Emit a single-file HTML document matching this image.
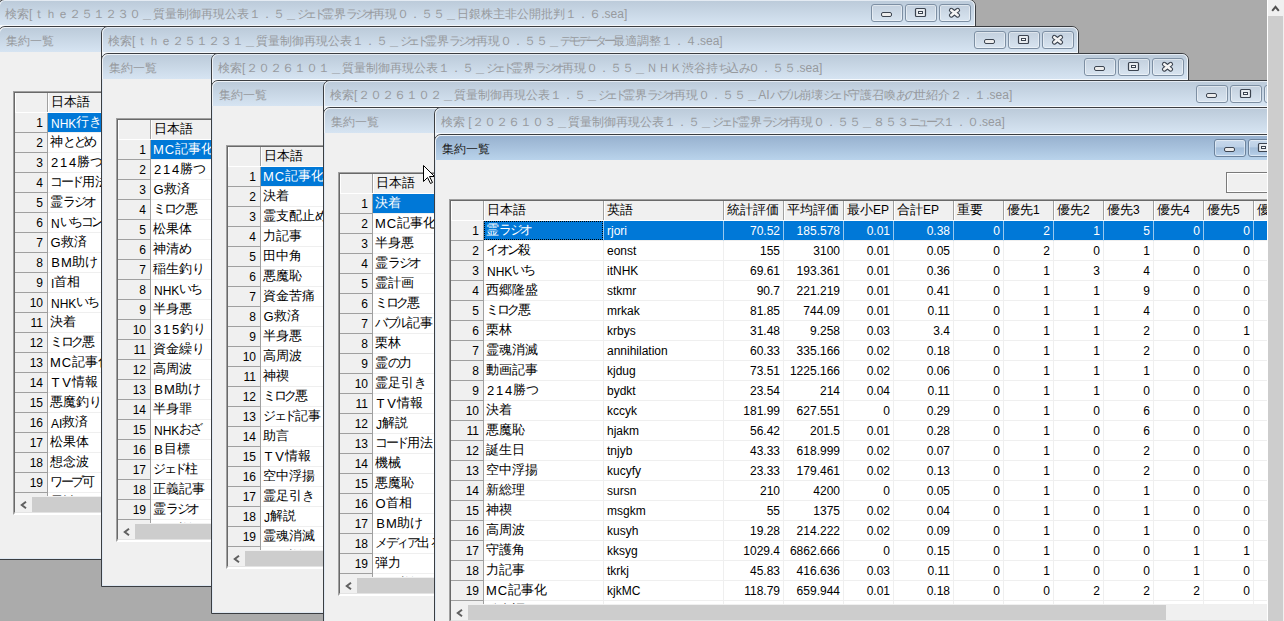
<!DOCTYPE html><html><head><meta charset="utf-8"><style>
*{box-sizing:border-box}
body{margin:0;width:1284px;height:621px;background:#ababab;position:relative;overflow:hidden;font-family:"Liberation Sans",sans-serif;font-size:12px}
.win{position:absolute;width:978px;height:561px;border:1px solid #3b3e42;border-radius:7px 7px 0 0;background:#eef3f8;overflow:hidden}
.tbar{position:absolute;left:0;top:0;right:0;height:26px;background:linear-gradient(#bccbda,#d6e4f2);border-top:1px solid #e4ebf3;border-left:1px solid #eef3f8;border-right:1px solid #eef3f8;border-bottom:1px solid #f6f9fc;border-radius:6px 6px 0 0}
.hk{letter-spacing:-0.6px}
.win .hl{position:absolute;left:0;top:0;right:0;height:25px;border-top:1px solid #eef3f8;border-left:1px solid #eef3f8;border-right:1px solid #eef3f8;border-radius:4px 4px 0 0;}
.title{position:absolute;left:6px;top:6px;white-space:nowrap;color:#979a9e;font-size:12px;line-height:16px}
.inner{position:absolute;left:-1px;top:26px;width:978px;height:534px;border:1px solid #3b3e42;border-radius:7px 7px 0 0;background:#f0f0f0;overflow:hidden}
.inner .tb{position:absolute;left:0;top:0;right:0;height:25px;background:linear-gradient(#bccbda,#d6e4f2);border-top:1px solid #eef3f8;border-left:1px solid #eef3f8;border-radius:6px 6px 0 0}
.inner.act .tb{background:linear-gradient(#97b1cf,#b9d3eb)}
.inner .ititle{position:absolute;left:7px;top:6px;color:#979a9e;font-size:12px;line-height:16px;white-space:nowrap}
.inner.act .ititle{color:#202020}
.inner .side{position:absolute;left:0;top:25px;bottom:0;width:1px;background:#dfe8f2}
.inner .bot{position:absolute;left:0;right:0;bottom:0;height:1px;background:#dfe8f2}
.btn{position:absolute;width:32px;height:18px;border:1px solid #7d8fa3;border-radius:3px;background:linear-gradient(#c3d0de,#d8e4f0);box-shadow:inset 0 0 0 1px rgba(255,255,255,.45)}
.inner.act .btn{background:linear-gradient(#c8d9ec,#bcd0e6 42%,#a3bdd9 50%,#aec7e2 80%,#bcd4ec);border-color:#6b829c}
.btn svg{position:absolute;left:0;top:0}
.grid{position:absolute;height:424px;border-top:2px solid;border-left:2px solid;border-bottom:2px solid;border-color:#a0a0a0 #fff #fff #a0a0a0;background:#f0f0f0}
.grid:before{content:"";position:absolute;left:-1px;top:-1px;right:0;bottom:0;border-top:1px solid #696969;border-left:1px solid #696969;border-bottom:1px solid #e3e3e3;pointer-events:none;z-index:3}
.gi{position:absolute;left:0;top:0;right:0;height:403px;overflow:hidden;background:#fff}
.hc{position:absolute;background:#f0f0f0;box-sizing:content-box;border-right:1px solid #a0a0a0;white-space:nowrap;overflow:hidden;box-shadow:inset 1px 0 0 #fff}
.hc span{position:absolute;left:3px;top:2px;line-height:14px}
.hc .j{top:0}
.rh{position:absolute;left:0;width:32px;height:19px;box-sizing:content-box;background:#f0f0f0;border-right:1px solid #a0a0a0;border-bottom:1px solid #a0a0a0;text-align:right;padding:1px 0 0 0;height:18px;line-height:19px;color:#000}
.rh{padding-right:4px;width:28px}
.dc{position:absolute;height:19px;box-sizing:content-box;border-right:1px solid #efefef;border-bottom:1px solid #efefef;background:#fff;white-space:nowrap;overflow:hidden;line-height:19px}
.dc span{position:absolute;left:2px;top:1px}
.dc.num span{left:auto;right:3px}
.dc.sel{background:#0078d7;color:#fff;border-right-color:#99c9ef}
.j{font-weight:normal;position:relative;top:-2px;font-size:13px}
.k{letter-spacing:-2.5px}
.fw{font-weight:normal;display:inline-block;text-align:center;font-size:13px;position:relative;top:-1px}
.focus{position:absolute;left:0;top:0;right:0;bottom:0;border:1px dotted #000}
.hs{position:absolute;left:0;top:403px;right:0;height:17px;background:#f0f0f0}
.la{position:absolute;left:5px;top:5px}
.th{position:absolute;left:17px;top:1px;height:15px;background:#cdcdcd}
.vs{position:absolute;left:1267px;top:0;width:17px;height:621px;background:#f0f0f0;border-left:1px solid #fff}
.vs .th2{position:absolute;left:0;top:16px;width:15px;height:605px;background:#cdcdcd}
.tbx{position:absolute;width:60px;height:21px;background:#f0f0f0;border:1px solid #7a7a7a;box-shadow:inset 0 0 0 1px #fff}
.cursor{position:absolute;left:423px;top:165px;z-index:1}
</style></head><body><div class="win" style="left:-2px;top:-1px;z-index:10"><div class="tbar"></div><div class="title">検索<span style="margin-right:0.7px">[</span>ｔｈｅ２５１２３０＿質量制御再現公表１．５＿<span style="letter-spacing:-3.6px">ジェド</span>霊界<span style="letter-spacing:-3.0px">ラジオ</span>再現０．５５＿日銀株主非公開批判１．６.sea]</div><div class="btn" style="left:872px;top:4px"><svg width="30" height="16" viewBox="0 0 30 16"><rect x="9.5" y="7.5" width="10" height="4" rx="1.5" fill="#ececec" stroke="#3c4450" stroke-width="1"/></svg></div><div class="btn" style="left:906px;top:4px"><svg width="30" height="16" viewBox="0 0 30 16"><rect x="9.5" y="3.5" width="10" height="8" rx="1" fill="#e8ecf0" stroke="#3c4450" stroke-width="1.2"/><rect x="12.5" y="6.5" width="4" height="2" fill="#fff" stroke="#3c4450" stroke-width="1"/></svg></div><div class="btn" style="left:940px;top:4px"><svg width="30" height="16" viewBox="0 0 30 16"><path d="M11.3 5.2 L17.7 10.3 M17.7 5.2 L11.3 10.3" stroke="#3c4450" stroke-width="4.8" stroke-linecap="round"/><path d="M11.3 5.2 L17.7 10.3 M17.7 5.2 L11.3 10.3" stroke="#f4f4f4" stroke-width="2.6" stroke-linecap="round"/></svg></div><div class="inner"><div class="tb"></div><div class="side"></div><div class="bot"></div><div class="ititle">集約一覧</div></div></div><div style="position:absolute;left:0;top:0;z-index:11"><div class="grid" style="left:13px;top:91px;width:277px"><div class="gi"><div class="hc" style="left:0;top:0;width:32px;height:19px"></div><div class="hc" style="left:33px;top:0;width:119px;height:19px"><span><b class="j">日本語</b></span></div><div class="hc" style="left:153px;top:0;width:119px;height:19px"><span><b class="j">英語</b></span></div><div class="rh" style="top:20px">1</div><div class="dc sel" style="left:33px;top:20px;width:119px"><span style="left:3px">NHK<b class="j">行</b><b class="j k">き</b></span></div><div class="dc sel" style="left:153px;top:20px;width:119px"><span></span></div><div class="rh" style="top:40px">2</div><div class="dc" style="left:33px;top:40px;width:119px"><span><b class="j">神</b><b class="j k">とどめ</b></span></div><div class="dc" style="left:153px;top:40px;width:119px"><span></span></div><div class="rh" style="top:60px">3</div><div class="dc" style="left:33px;top:60px;width:119px"><span><b class="fw" style="width:9px">2</b><b class="fw" style="width:9px">1</b><b class="fw" style="width:9px">4</b><b class="j">勝</b><b class="j k">つ</b></span></div><div class="dc" style="left:153px;top:60px;width:119px"><span></span></div><div class="rh" style="top:80px">4</div><div class="dc" style="left:33px;top:80px;width:119px"><span><b class="j k">コード</b><b class="j">用法</b></span></div><div class="dc" style="left:153px;top:80px;width:119px"><span></span></div><div class="rh" style="top:100px">5</div><div class="dc" style="left:33px;top:100px;width:119px"><span><b class="j">霊</b><b class="j k">ラジオ</b></span></div><div class="dc" style="left:153px;top:100px;width:119px"><span></span></div><div class="rh" style="top:120px">6</div><div class="dc" style="left:33px;top:120px;width:119px"><span style="left:3px">N<b class="j k">いちコン</b></span></div><div class="dc" style="left:153px;top:120px;width:119px"><span></span></div><div class="rh" style="top:140px">7</div><div class="dc" style="left:33px;top:140px;width:119px"><span><b class="fw" style="width:11px">G</b><b class="j">救済</b></span></div><div class="dc" style="left:153px;top:140px;width:119px"><span></span></div><div class="rh" style="top:160px">8</div><div class="dc" style="left:33px;top:160px;width:119px"><span><b class="fw" style="width:11px">B</b><b class="fw" style="width:11px">M</b><b class="j">助</b><b class="j k">け</b></span></div><div class="dc" style="left:153px;top:160px;width:119px"><span></span></div><div class="rh" style="top:180px">9</div><div class="dc" style="left:33px;top:180px;width:119px"><span style="left:3px">I<b class="j">首相</b></span></div><div class="dc" style="left:153px;top:180px;width:119px"><span></span></div><div class="rh" style="top:200px">10</div><div class="dc" style="left:33px;top:200px;width:119px"><span style="left:3px">NHK<b class="j k">いち</b></span></div><div class="dc" style="left:153px;top:200px;width:119px"><span></span></div><div class="rh" style="top:220px">11</div><div class="dc" style="left:33px;top:220px;width:119px"><span><b class="j">決着</b></span></div><div class="dc" style="left:153px;top:220px;width:119px"><span></span></div><div class="rh" style="top:240px">12</div><div class="dc" style="left:33px;top:240px;width:119px"><span><b class="j k">ミロク</b><b class="j">悪</b></span></div><div class="dc" style="left:153px;top:240px;width:119px"><span></span></div><div class="rh" style="top:260px">13</div><div class="dc" style="left:33px;top:260px;width:119px"><span><b class="fw" style="width:11px">M</b><b class="fw" style="width:11px">C</b><b class="j">記事化</b></span></div><div class="dc" style="left:153px;top:260px;width:119px"><span></span></div><div class="rh" style="top:280px">14</div><div class="dc" style="left:33px;top:280px;width:119px"><span><b class="fw" style="width:11px">T</b><b class="fw" style="width:11px">V</b><b class="j">情報</b></span></div><div class="dc" style="left:153px;top:280px;width:119px"><span></span></div><div class="rh" style="top:300px">15</div><div class="dc" style="left:33px;top:300px;width:119px"><span><b class="j">悪魔釣</b><b class="j k">り</b></span></div><div class="dc" style="left:153px;top:300px;width:119px"><span></span></div><div class="rh" style="top:320px">16</div><div class="dc" style="left:33px;top:320px;width:119px"><span style="left:3px">AI<b class="j">救済</b></span></div><div class="dc" style="left:153px;top:320px;width:119px"><span></span></div><div class="rh" style="top:340px">17</div><div class="dc" style="left:33px;top:340px;width:119px"><span><b class="j">松果体</b></span></div><div class="dc" style="left:153px;top:340px;width:119px"><span></span></div><div class="rh" style="top:360px">18</div><div class="dc" style="left:33px;top:360px;width:119px"><span><b class="j">想念波</b></span></div><div class="dc" style="left:153px;top:360px;width:119px"><span></span></div><div class="rh" style="top:380px">19</div><div class="dc" style="left:33px;top:380px;width:119px"><span><b class="j k">ワープ</b><b class="j">可</b></span></div><div class="dc" style="left:153px;top:380px;width:119px"><span></span></div><div class="rh" style="top:400px"></div><div class="dc" style="left:33px;top:400px;width:119px"><span><b class="j">霊計画</b></span></div><div class="dc" style="left:153px;top:400px;width:119px"><span></span></div></div><div class="hs"><svg class="la" width="8" height="8" viewBox="0 0 8 8"><path d="M6 0.8 L1.8 4 L6 7.2" fill="none" stroke="#606060" stroke-width="2"/></svg><div class="th" style="width:698px"></div></div></div></div><div class="win" style="left:101px;top:26px;z-index:20"><div class="tbar"></div><div class="title">検索<span style="margin-right:0.7px">[</span>ｔｈｅ２５１２３１＿質量制御再現公表１．５＿<span style="letter-spacing:-3.6px">ジェド</span>霊界<span style="letter-spacing:-3.0px">ラジオ</span>再現０．５５＿<span style="letter-spacing:-3.27px">デモデーター</span>最適調整１．４.sea]</div><div class="btn" style="left:872px;top:4px"><svg width="30" height="16" viewBox="0 0 30 16"><rect x="9.5" y="7.5" width="10" height="4" rx="1.5" fill="#ececec" stroke="#3c4450" stroke-width="1"/></svg></div><div class="btn" style="left:906px;top:4px"><svg width="30" height="16" viewBox="0 0 30 16"><rect x="9.5" y="3.5" width="10" height="8" rx="1" fill="#e8ecf0" stroke="#3c4450" stroke-width="1.2"/><rect x="12.5" y="6.5" width="4" height="2" fill="#fff" stroke="#3c4450" stroke-width="1"/></svg></div><div class="btn" style="left:940px;top:4px"><svg width="30" height="16" viewBox="0 0 30 16"><path d="M11.3 5.2 L17.7 10.3 M17.7 5.2 L11.3 10.3" stroke="#3c4450" stroke-width="4.8" stroke-linecap="round"/><path d="M11.3 5.2 L17.7 10.3 M17.7 5.2 L11.3 10.3" stroke="#f4f4f4" stroke-width="2.6" stroke-linecap="round"/></svg></div><div class="inner"><div class="tb"></div><div class="side"></div><div class="bot"></div><div class="ititle">集約一覧</div></div></div><div style="position:absolute;left:0;top:0;z-index:21"><div class="grid" style="left:116px;top:118px;width:277px"><div class="gi"><div class="hc" style="left:0;top:0;width:32px;height:19px"></div><div class="hc" style="left:33px;top:0;width:119px;height:19px"><span><b class="j">日本語</b></span></div><div class="hc" style="left:153px;top:0;width:119px;height:19px"><span><b class="j">英語</b></span></div><div class="rh" style="top:20px">1</div><div class="dc sel" style="left:33px;top:20px;width:119px"><span><b class="fw" style="width:11px">M</b><b class="fw" style="width:11px">C</b><b class="j">記事化</b></span></div><div class="dc sel" style="left:153px;top:20px;width:119px"><span></span></div><div class="rh" style="top:40px">2</div><div class="dc" style="left:33px;top:40px;width:119px"><span><b class="fw" style="width:9px">2</b><b class="fw" style="width:9px">1</b><b class="fw" style="width:9px">4</b><b class="j">勝</b><b class="j k">つ</b></span></div><div class="dc" style="left:153px;top:40px;width:119px"><span></span></div><div class="rh" style="top:60px">3</div><div class="dc" style="left:33px;top:60px;width:119px"><span><b class="fw" style="width:11px">G</b><b class="j">救済</b></span></div><div class="dc" style="left:153px;top:60px;width:119px"><span></span></div><div class="rh" style="top:80px">4</div><div class="dc" style="left:33px;top:80px;width:119px"><span><b class="j k">ミロク</b><b class="j">悪</b></span></div><div class="dc" style="left:153px;top:80px;width:119px"><span></span></div><div class="rh" style="top:100px">5</div><div class="dc" style="left:33px;top:100px;width:119px"><span><b class="j">松果体</b></span></div><div class="dc" style="left:153px;top:100px;width:119px"><span></span></div><div class="rh" style="top:120px">6</div><div class="dc" style="left:33px;top:120px;width:119px"><span><b class="j">神清</b><b class="j k">め</b></span></div><div class="dc" style="left:153px;top:120px;width:119px"><span></span></div><div class="rh" style="top:140px">7</div><div class="dc" style="left:33px;top:140px;width:119px"><span><b class="j">稲生釣</b><b class="j k">り</b></span></div><div class="dc" style="left:153px;top:140px;width:119px"><span></span></div><div class="rh" style="top:160px">8</div><div class="dc" style="left:33px;top:160px;width:119px"><span style="left:3px">NHK<b class="j k">いち</b></span></div><div class="dc" style="left:153px;top:160px;width:119px"><span></span></div><div class="rh" style="top:180px">9</div><div class="dc" style="left:33px;top:180px;width:119px"><span><b class="j">半身悪</b></span></div><div class="dc" style="left:153px;top:180px;width:119px"><span></span></div><div class="rh" style="top:200px">10</div><div class="dc" style="left:33px;top:200px;width:119px"><span><b class="fw" style="width:9px">3</b><b class="fw" style="width:9px">1</b><b class="fw" style="width:9px">5</b><b class="j">釣</b><b class="j k">り</b></span></div><div class="dc" style="left:153px;top:200px;width:119px"><span></span></div><div class="rh" style="top:220px">11</div><div class="dc" style="left:33px;top:220px;width:119px"><span><b class="j">資金繰</b><b class="j k">り</b></span></div><div class="dc" style="left:153px;top:220px;width:119px"><span></span></div><div class="rh" style="top:240px">12</div><div class="dc" style="left:33px;top:240px;width:119px"><span><b class="j">高周波</b></span></div><div class="dc" style="left:153px;top:240px;width:119px"><span></span></div><div class="rh" style="top:260px">13</div><div class="dc" style="left:33px;top:260px;width:119px"><span><b class="fw" style="width:11px">B</b><b class="fw" style="width:11px">M</b><b class="j">助</b><b class="j k">け</b></span></div><div class="dc" style="left:153px;top:260px;width:119px"><span></span></div><div class="rh" style="top:280px">14</div><div class="dc" style="left:33px;top:280px;width:119px"><span><b class="j">半身罪</b></span></div><div class="dc" style="left:153px;top:280px;width:119px"><span></span></div><div class="rh" style="top:300px">15</div><div class="dc" style="left:33px;top:300px;width:119px"><span style="left:3px">NHK<b class="j k">おざ</b></span></div><div class="dc" style="left:153px;top:300px;width:119px"><span></span></div><div class="rh" style="top:320px">16</div><div class="dc" style="left:33px;top:320px;width:119px"><span><b class="fw" style="width:11px">B</b><b class="j">目標</b></span></div><div class="dc" style="left:153px;top:320px;width:119px"><span></span></div><div class="rh" style="top:340px">17</div><div class="dc" style="left:33px;top:340px;width:119px"><span><b class="j k">ジェド</b><b class="j">柱</b></span></div><div class="dc" style="left:153px;top:340px;width:119px"><span></span></div><div class="rh" style="top:360px">18</div><div class="dc" style="left:33px;top:360px;width:119px"><span><b class="j">正義記事</b></span></div><div class="dc" style="left:153px;top:360px;width:119px"><span></span></div><div class="rh" style="top:380px">19</div><div class="dc" style="left:33px;top:380px;width:119px"><span><b class="j">霊</b><b class="j k">ラジオ</b></span></div><div class="dc" style="left:153px;top:380px;width:119px"><span></span></div><div class="rh" style="top:400px"></div><div class="dc" style="left:33px;top:400px;width:119px"><span style="left:3px">NHK<b class="j">語</b></span></div><div class="dc" style="left:153px;top:400px;width:119px"><span></span></div></div><div class="hs"><svg class="la" width="8" height="8" viewBox="0 0 8 8"><path d="M6 0.8 L1.8 4 L6 7.2" fill="none" stroke="#606060" stroke-width="2"/></svg><div class="th" style="width:698px"></div></div></div></div><div class="win" style="left:211px;top:53px;z-index:30"><div class="tbar"></div><div class="title">検索<span style="margin-right:0.7px">[</span>２０２６１０１＿質量制御再現公表１．５＿<span style="letter-spacing:-3.6px">ジェド</span>霊界<span style="letter-spacing:-3.0px">ラジオ</span>再現０．５５＿ＮＨＫ渋谷持<span style="letter-spacing:-3px">ち</span>込<span style="letter-spacing:-3px">み</span>０．５５.sea]</div><div class="btn" style="left:872px;top:4px"><svg width="30" height="16" viewBox="0 0 30 16"><rect x="9.5" y="7.5" width="10" height="4" rx="1.5" fill="#ececec" stroke="#3c4450" stroke-width="1"/></svg></div><div class="btn" style="left:906px;top:4px"><svg width="30" height="16" viewBox="0 0 30 16"><rect x="9.5" y="3.5" width="10" height="8" rx="1" fill="#e8ecf0" stroke="#3c4450" stroke-width="1.2"/><rect x="12.5" y="6.5" width="4" height="2" fill="#fff" stroke="#3c4450" stroke-width="1"/></svg></div><div class="btn" style="left:940px;top:4px"><svg width="30" height="16" viewBox="0 0 30 16"><path d="M11.3 5.2 L17.7 10.3 M17.7 5.2 L11.3 10.3" stroke="#3c4450" stroke-width="4.8" stroke-linecap="round"/><path d="M11.3 5.2 L17.7 10.3 M17.7 5.2 L11.3 10.3" stroke="#f4f4f4" stroke-width="2.6" stroke-linecap="round"/></svg></div><div class="inner"><div class="tb"></div><div class="side"></div><div class="bot"></div><div class="ititle">集約一覧</div></div></div><div style="position:absolute;left:0;top:0;z-index:31"><div class="grid" style="left:226px;top:145px;width:277px"><div class="gi"><div class="hc" style="left:0;top:0;width:32px;height:19px"></div><div class="hc" style="left:33px;top:0;width:119px;height:19px"><span><b class="j">日本語</b></span></div><div class="hc" style="left:153px;top:0;width:119px;height:19px"><span><b class="j">英語</b></span></div><div class="rh" style="top:20px">1</div><div class="dc sel" style="left:33px;top:20px;width:119px"><span><b class="fw" style="width:11px">M</b><b class="fw" style="width:11px">C</b><b class="j">記事化</b></span></div><div class="dc sel" style="left:153px;top:20px;width:119px"><span></span></div><div class="rh" style="top:40px">2</div><div class="dc" style="left:33px;top:40px;width:119px"><span><b class="j">決着</b></span></div><div class="dc" style="left:153px;top:40px;width:119px"><span></span></div><div class="rh" style="top:60px">3</div><div class="dc" style="left:33px;top:60px;width:119px"><span><b class="j">霊支配止</b><b class="j k">め</b></span></div><div class="dc" style="left:153px;top:60px;width:119px"><span></span></div><div class="rh" style="top:80px">4</div><div class="dc" style="left:33px;top:80px;width:119px"><span><b class="j">力記事</b></span></div><div class="dc" style="left:153px;top:80px;width:119px"><span></span></div><div class="rh" style="top:100px">5</div><div class="dc" style="left:33px;top:100px;width:119px"><span><b class="j">田中角</b></span></div><div class="dc" style="left:153px;top:100px;width:119px"><span></span></div><div class="rh" style="top:120px">6</div><div class="dc" style="left:33px;top:120px;width:119px"><span><b class="j">悪魔恥</b></span></div><div class="dc" style="left:153px;top:120px;width:119px"><span></span></div><div class="rh" style="top:140px">7</div><div class="dc" style="left:33px;top:140px;width:119px"><span><b class="j">資金苦痛</b></span></div><div class="dc" style="left:153px;top:140px;width:119px"><span></span></div><div class="rh" style="top:160px">8</div><div class="dc" style="left:33px;top:160px;width:119px"><span><b class="fw" style="width:11px">G</b><b class="j">救済</b></span></div><div class="dc" style="left:153px;top:160px;width:119px"><span></span></div><div class="rh" style="top:180px">9</div><div class="dc" style="left:33px;top:180px;width:119px"><span><b class="j">半身悪</b></span></div><div class="dc" style="left:153px;top:180px;width:119px"><span></span></div><div class="rh" style="top:200px">10</div><div class="dc" style="left:33px;top:200px;width:119px"><span><b class="j">高周波</b></span></div><div class="dc" style="left:153px;top:200px;width:119px"><span></span></div><div class="rh" style="top:220px">11</div><div class="dc" style="left:33px;top:220px;width:119px"><span><b class="j">神禊</b></span></div><div class="dc" style="left:153px;top:220px;width:119px"><span></span></div><div class="rh" style="top:240px">12</div><div class="dc" style="left:33px;top:240px;width:119px"><span><b class="j k">ミロク</b><b class="j">悪</b></span></div><div class="dc" style="left:153px;top:240px;width:119px"><span></span></div><div class="rh" style="top:260px">13</div><div class="dc" style="left:33px;top:260px;width:119px"><span><b class="j k">ジェド</b><b class="j">記事</b></span></div><div class="dc" style="left:153px;top:260px;width:119px"><span></span></div><div class="rh" style="top:280px">14</div><div class="dc" style="left:33px;top:280px;width:119px"><span><b class="j">助言</b></span></div><div class="dc" style="left:153px;top:280px;width:119px"><span></span></div><div class="rh" style="top:300px">15</div><div class="dc" style="left:33px;top:300px;width:119px"><span><b class="fw" style="width:11px">T</b><b class="fw" style="width:11px">V</b><b class="j">情報</b></span></div><div class="dc" style="left:153px;top:300px;width:119px"><span></span></div><div class="rh" style="top:320px">16</div><div class="dc" style="left:33px;top:320px;width:119px"><span><b class="j">空中浮揚</b></span></div><div class="dc" style="left:153px;top:320px;width:119px"><span></span></div><div class="rh" style="top:340px">17</div><div class="dc" style="left:33px;top:340px;width:119px"><span><b class="j">霊足引</b><b class="j k">き</b></span></div><div class="dc" style="left:153px;top:340px;width:119px"><span></span></div><div class="rh" style="top:360px">18</div><div class="dc" style="left:33px;top:360px;width:119px"><span style="left:3px">J<b class="j">解説</b></span></div><div class="dc" style="left:153px;top:360px;width:119px"><span></span></div><div class="rh" style="top:380px">19</div><div class="dc" style="left:33px;top:380px;width:119px"><span><b class="j">霊魂消滅</b></span></div><div class="dc" style="left:153px;top:380px;width:119px"><span></span></div><div class="rh" style="top:400px"></div><div class="dc" style="left:33px;top:400px;width:119px"><span style="left:3px">NHK<b class="j">語</b></span></div><div class="dc" style="left:153px;top:400px;width:119px"><span></span></div></div><div class="hs"><svg class="la" width="8" height="8" viewBox="0 0 8 8"><path d="M6 0.8 L1.8 4 L6 7.2" fill="none" stroke="#606060" stroke-width="2"/></svg><div class="th" style="width:698px"></div></div></div></div><div class="win" style="left:323px;top:80px;z-index:40"><div class="tbar"></div><div class="title">検索<span style="margin-right:0.7px">[</span>２０２６１０２＿質量制御再現公表１．５＿<span style="letter-spacing:-3.6px">ジェド</span>霊界<span style="letter-spacing:-3.0px">ラジオ</span>再現０．５５＿AI<span style="letter-spacing:-2.17px">バブル</span>崩壊<span style="letter-spacing:-3.6px">ジェド</span>守護召喚<span style="letter-spacing:-3px">あの</span>世紹介２．１.sea]</div><div class="btn" style="left:872px;top:4px"><svg width="30" height="16" viewBox="0 0 30 16"><rect x="9.5" y="7.5" width="10" height="4" rx="1.5" fill="#ececec" stroke="#3c4450" stroke-width="1"/></svg></div><div class="btn" style="left:906px;top:4px"><svg width="30" height="16" viewBox="0 0 30 16"><rect x="9.5" y="3.5" width="10" height="8" rx="1" fill="#e8ecf0" stroke="#3c4450" stroke-width="1.2"/><rect x="12.5" y="6.5" width="4" height="2" fill="#fff" stroke="#3c4450" stroke-width="1"/></svg></div><div class="btn" style="left:940px;top:4px"><svg width="30" height="16" viewBox="0 0 30 16"><path d="M11.3 5.2 L17.7 10.3 M17.7 5.2 L11.3 10.3" stroke="#3c4450" stroke-width="4.8" stroke-linecap="round"/><path d="M11.3 5.2 L17.7 10.3 M17.7 5.2 L11.3 10.3" stroke="#f4f4f4" stroke-width="2.6" stroke-linecap="round"/></svg></div><div class="inner"><div class="tb"></div><div class="side"></div><div class="bot"></div><div class="ititle">集約一覧</div></div></div><div style="position:absolute;left:0;top:0;z-index:41"><div class="grid" style="left:338px;top:172px;width:277px"><div class="gi"><div class="hc" style="left:0;top:0;width:32px;height:19px"></div><div class="hc" style="left:33px;top:0;width:119px;height:19px"><span><b class="j">日本語</b></span></div><div class="hc" style="left:153px;top:0;width:119px;height:19px"><span><b class="j">英語</b></span></div><div class="rh" style="top:20px">1</div><div class="dc sel" style="left:33px;top:20px;width:119px"><span><b class="j">決着</b></span></div><div class="dc sel" style="left:153px;top:20px;width:119px"><span></span></div><div class="rh" style="top:40px">2</div><div class="dc" style="left:33px;top:40px;width:119px"><span><b class="fw" style="width:11px">M</b><b class="fw" style="width:11px">C</b><b class="j">記事化</b></span></div><div class="dc" style="left:153px;top:40px;width:119px"><span></span></div><div class="rh" style="top:60px">3</div><div class="dc" style="left:33px;top:60px;width:119px"><span><b class="j">半身悪</b></span></div><div class="dc" style="left:153px;top:60px;width:119px"><span></span></div><div class="rh" style="top:80px">4</div><div class="dc" style="left:33px;top:80px;width:119px"><span><b class="j">霊</b><b class="j k">ラジオ</b></span></div><div class="dc" style="left:153px;top:80px;width:119px"><span></span></div><div class="rh" style="top:100px">5</div><div class="dc" style="left:33px;top:100px;width:119px"><span><b class="j">霊計画</b></span></div><div class="dc" style="left:153px;top:100px;width:119px"><span></span></div><div class="rh" style="top:120px">6</div><div class="dc" style="left:33px;top:120px;width:119px"><span><b class="j k">ミロク</b><b class="j">悪</b></span></div><div class="dc" style="left:153px;top:120px;width:119px"><span></span></div><div class="rh" style="top:140px">7</div><div class="dc" style="left:33px;top:140px;width:119px"><span><b class="j k">バブル</b><b class="j">記事</b></span></div><div class="dc" style="left:153px;top:140px;width:119px"><span></span></div><div class="rh" style="top:160px">8</div><div class="dc" style="left:33px;top:160px;width:119px"><span><b class="j">栗林</b></span></div><div class="dc" style="left:153px;top:160px;width:119px"><span></span></div><div class="rh" style="top:180px">9</div><div class="dc" style="left:33px;top:180px;width:119px"><span><b class="j">霊</b><b class="j k">の</b><b class="j">力</b></span></div><div class="dc" style="left:153px;top:180px;width:119px"><span></span></div><div class="rh" style="top:200px">10</div><div class="dc" style="left:33px;top:200px;width:119px"><span><b class="j">霊足引</b><b class="j k">き</b></span></div><div class="dc" style="left:153px;top:200px;width:119px"><span></span></div><div class="rh" style="top:220px">11</div><div class="dc" style="left:33px;top:220px;width:119px"><span><b class="fw" style="width:11px">T</b><b class="fw" style="width:11px">V</b><b class="j">情報</b></span></div><div class="dc" style="left:153px;top:220px;width:119px"><span></span></div><div class="rh" style="top:240px">12</div><div class="dc" style="left:33px;top:240px;width:119px"><span style="left:3px">J<b class="j">解説</b></span></div><div class="dc" style="left:153px;top:240px;width:119px"><span></span></div><div class="rh" style="top:260px">13</div><div class="dc" style="left:33px;top:260px;width:119px"><span><b class="j k">コード</b><b class="j">用法</b></span></div><div class="dc" style="left:153px;top:260px;width:119px"><span></span></div><div class="rh" style="top:280px">14</div><div class="dc" style="left:33px;top:280px;width:119px"><span><b class="j">機械</b></span></div><div class="dc" style="left:153px;top:280px;width:119px"><span></span></div><div class="rh" style="top:300px">15</div><div class="dc" style="left:33px;top:300px;width:119px"><span><b class="j">悪魔恥</b></span></div><div class="dc" style="left:153px;top:300px;width:119px"><span></span></div><div class="rh" style="top:320px">16</div><div class="dc" style="left:33px;top:320px;width:119px"><span><b class="fw" style="width:11px">O</b><b class="j">首相</b></span></div><div class="dc" style="left:153px;top:320px;width:119px"><span></span></div><div class="rh" style="top:340px">17</div><div class="dc" style="left:33px;top:340px;width:119px"><span><b class="fw" style="width:11px">B</b><b class="fw" style="width:11px">M</b><b class="j">助</b><b class="j k">け</b></span></div><div class="dc" style="left:153px;top:340px;width:119px"><span></span></div><div class="rh" style="top:360px">18</div><div class="dc" style="left:33px;top:360px;width:119px"><span><b class="j k">メディア</b><b class="j">出</b><b class="j k">る</b></span></div><div class="dc" style="left:153px;top:360px;width:119px"><span></span></div><div class="rh" style="top:380px">19</div><div class="dc" style="left:33px;top:380px;width:119px"><span><b class="j">弾力</b></span></div><div class="dc" style="left:153px;top:380px;width:119px"><span></span></div><div class="rh" style="top:400px"></div><div class="dc" style="left:33px;top:400px;width:119px"><span style="left:3px">NHK<b class="j">語</b></span></div><div class="dc" style="left:153px;top:400px;width:119px"><span></span></div></div><div class="hs"><svg class="la" width="8" height="8" viewBox="0 0 8 8"><path d="M6 0.8 L1.8 4 L6 7.2" fill="none" stroke="#606060" stroke-width="2"/></svg><div class="th" style="width:698px"></div></div></div></div><div class="win" style="left:434px;top:107px;z-index:50"><div class="tbar"></div><div class="title">検索 <span style="margin-right:0.7px">[</span>２０２６１０３＿質量制御再現公表１．５＿<span style="letter-spacing:-3.6px">ジェド</span>霊界<span style="letter-spacing:-3.0px">ラジオ</span>再現０．５５＿８５３<span style="letter-spacing:-3.45px">ニュース</span>１．０.sea]</div><div class="btn" style="left:872px;top:4px"><svg width="30" height="16" viewBox="0 0 30 16"><rect x="9.5" y="7.5" width="10" height="4" rx="1.5" fill="#ececec" stroke="#3c4450" stroke-width="1"/></svg></div><div class="btn" style="left:906px;top:4px"><svg width="30" height="16" viewBox="0 0 30 16"><rect x="9.5" y="3.5" width="10" height="8" rx="1" fill="#e8ecf0" stroke="#3c4450" stroke-width="1.2"/><rect x="12.5" y="6.5" width="4" height="2" fill="#fff" stroke="#3c4450" stroke-width="1"/></svg></div><div class="btn" style="left:940px;top:4px"><svg width="30" height="16" viewBox="0 0 30 16"><path d="M11.3 5.2 L17.7 10.3 M17.7 5.2 L11.3 10.3" stroke="#3c4450" stroke-width="4.8" stroke-linecap="round"/><path d="M11.3 5.2 L17.7 10.3 M17.7 5.2 L11.3 10.3" stroke="#f4f4f4" stroke-width="2.6" stroke-linecap="round"/></svg></div><div class="inner act"><div class="tb"></div><div class="side"></div><div class="bot"></div><div class="ititle">集約一覧</div><div class="btn" style="left:779px;top:4px"><svg width="30" height="16" viewBox="0 0 30 16"><rect x="9.5" y="7.5" width="10" height="4" rx="1.5" fill="#ececec" stroke="#3c4450" stroke-width="1"/></svg></div><div class="btn" style="left:813px;top:4px"><svg width="30" height="16" viewBox="0 0 30 16"><rect x="9.5" y="3.5" width="10" height="8" rx="1" fill="#e8ecf0" stroke="#3c4450" stroke-width="1.2"/><rect x="12.5" y="6.5" width="4" height="2" fill="#fff" stroke="#3c4450" stroke-width="1"/></svg></div><div class="btn" style="left:847px;top:4px"><svg width="30" height="16" viewBox="0 0 30 16"><path d="M11.3 5.2 L17.7 10.3 M17.7 5.2 L11.3 10.3" stroke="#3c4450" stroke-width="4.8" stroke-linecap="round"/><path d="M11.3 5.2 L17.7 10.3 M17.7 5.2 L11.3 10.3" stroke="#f4f4f4" stroke-width="2.6" stroke-linecap="round"/></svg></div><div class="tbx" style="left:791px;top:37px"></div></div></div><div style="position:absolute;left:0;top:0;z-index:51"><div class="grid" style="left:449px;top:199px;width:857px"><div class="gi"><div class="hc" style="left:0;top:0;width:32px;height:19px"></div><div class="hc" style="left:33px;top:0;width:119px;height:19px"><span><b class="j">日本語</b></span></div><div class="hc" style="left:153px;top:0;width:119px;height:19px"><span><b class="j">英語</b></span></div><div class="hc" style="left:273px;top:0;width:59px;height:19px"><span><b class="j">統計評価</b></span></div><div class="hc" style="left:333px;top:0;width:59px;height:19px"><span><b class="j">平均評価</b></span></div><div class="hc" style="left:393px;top:0;width:49px;height:19px"><span><b class="j">最小</b>EP</span></div><div class="hc" style="left:443px;top:0;width:59px;height:19px"><span><b class="j">合計</b>EP</span></div><div class="hc" style="left:503px;top:0;width:49px;height:19px"><span><b class="j">重要</b></span></div><div class="hc" style="left:553px;top:0;width:49px;height:19px"><span><b class="j">優先</b>1</span></div><div class="hc" style="left:603px;top:0;width:49px;height:19px"><span><b class="j">優先</b>2</span></div><div class="hc" style="left:653px;top:0;width:49px;height:19px"><span><b class="j">優先</b>3</span></div><div class="hc" style="left:703px;top:0;width:49px;height:19px"><span><b class="j">優先</b>4</span></div><div class="hc" style="left:753px;top:0;width:49px;height:19px"><span><b class="j">優先</b>5</span></div><div class="hc" style="left:803px;top:0;width:49px;height:19px"><span><b class="j">優先</b>6</span></div><div class="rh" style="top:20px">1</div><div class="dc sel" style="left:33px;top:20px;width:119px"><i class="focus"></i><span><b class="j">霊</b><b class="j k">ラジオ</b></span></div><div class="dc sel" style="left:153px;top:20px;width:119px"><span style="left:3px">rjori</span></div><div class="dc sel num" style="left:273px;top:20px;width:59px"><span>70.52</span></div><div class="dc sel num" style="left:333px;top:20px;width:59px"><span>185.578</span></div><div class="dc sel num" style="left:393px;top:20px;width:49px"><span>0.01</span></div><div class="dc sel num" style="left:443px;top:20px;width:59px"><span>0.38</span></div><div class="dc sel num" style="left:503px;top:20px;width:49px"><span>0</span></div><div class="dc sel num" style="left:553px;top:20px;width:49px"><span>2</span></div><div class="dc sel num" style="left:603px;top:20px;width:49px"><span>1</span></div><div class="dc sel num" style="left:653px;top:20px;width:49px"><span>5</span></div><div class="dc sel num" style="left:703px;top:20px;width:49px"><span>0</span></div><div class="dc sel num" style="left:753px;top:20px;width:49px"><span>0</span></div><div class="dc sel num" style="left:803px;top:20px;width:49px"><span></span></div><div class="rh" style="top:40px">2</div><div class="dc" style="left:33px;top:40px;width:119px"><span><b class="j k">イオン</b><b class="j">殺</b></span></div><div class="dc" style="left:153px;top:40px;width:119px"><span style="left:3px">eonst</span></div><div class="dc num" style="left:273px;top:40px;width:59px"><span>155</span></div><div class="dc num" style="left:333px;top:40px;width:59px"><span>3100</span></div><div class="dc num" style="left:393px;top:40px;width:49px"><span>0.01</span></div><div class="dc num" style="left:443px;top:40px;width:59px"><span>0.05</span></div><div class="dc num" style="left:503px;top:40px;width:49px"><span>0</span></div><div class="dc num" style="left:553px;top:40px;width:49px"><span>2</span></div><div class="dc num" style="left:603px;top:40px;width:49px"><span>0</span></div><div class="dc num" style="left:653px;top:40px;width:49px"><span>1</span></div><div class="dc num" style="left:703px;top:40px;width:49px"><span>0</span></div><div class="dc num" style="left:753px;top:40px;width:49px"><span>0</span></div><div class="dc num" style="left:803px;top:40px;width:49px"><span></span></div><div class="rh" style="top:60px">3</div><div class="dc" style="left:33px;top:60px;width:119px"><span style="left:3px">NHK<b class="j k">いち</b></span></div><div class="dc" style="left:153px;top:60px;width:119px"><span style="left:3px">itNHK</span></div><div class="dc num" style="left:273px;top:60px;width:59px"><span>69.61</span></div><div class="dc num" style="left:333px;top:60px;width:59px"><span>193.361</span></div><div class="dc num" style="left:393px;top:60px;width:49px"><span>0.01</span></div><div class="dc num" style="left:443px;top:60px;width:59px"><span>0.36</span></div><div class="dc num" style="left:503px;top:60px;width:49px"><span>0</span></div><div class="dc num" style="left:553px;top:60px;width:49px"><span>1</span></div><div class="dc num" style="left:603px;top:60px;width:49px"><span>3</span></div><div class="dc num" style="left:653px;top:60px;width:49px"><span>4</span></div><div class="dc num" style="left:703px;top:60px;width:49px"><span>0</span></div><div class="dc num" style="left:753px;top:60px;width:49px"><span>0</span></div><div class="dc num" style="left:803px;top:60px;width:49px"><span></span></div><div class="rh" style="top:80px">4</div><div class="dc" style="left:33px;top:80px;width:119px"><span><b class="j">西郷隆盛</b></span></div><div class="dc" style="left:153px;top:80px;width:119px"><span style="left:3px">stkmr</span></div><div class="dc num" style="left:273px;top:80px;width:59px"><span>90.7</span></div><div class="dc num" style="left:333px;top:80px;width:59px"><span>221.219</span></div><div class="dc num" style="left:393px;top:80px;width:49px"><span>0.01</span></div><div class="dc num" style="left:443px;top:80px;width:59px"><span>0.41</span></div><div class="dc num" style="left:503px;top:80px;width:49px"><span>0</span></div><div class="dc num" style="left:553px;top:80px;width:49px"><span>1</span></div><div class="dc num" style="left:603px;top:80px;width:49px"><span>1</span></div><div class="dc num" style="left:653px;top:80px;width:49px"><span>9</span></div><div class="dc num" style="left:703px;top:80px;width:49px"><span>0</span></div><div class="dc num" style="left:753px;top:80px;width:49px"><span>0</span></div><div class="dc num" style="left:803px;top:80px;width:49px"><span></span></div><div class="rh" style="top:100px">5</div><div class="dc" style="left:33px;top:100px;width:119px"><span><b class="j k">ミロク</b><b class="j">悪</b></span></div><div class="dc" style="left:153px;top:100px;width:119px"><span style="left:3px">mrkak</span></div><div class="dc num" style="left:273px;top:100px;width:59px"><span>81.85</span></div><div class="dc num" style="left:333px;top:100px;width:59px"><span>744.09</span></div><div class="dc num" style="left:393px;top:100px;width:49px"><span>0.01</span></div><div class="dc num" style="left:443px;top:100px;width:59px"><span>0.11</span></div><div class="dc num" style="left:503px;top:100px;width:49px"><span>0</span></div><div class="dc num" style="left:553px;top:100px;width:49px"><span>1</span></div><div class="dc num" style="left:603px;top:100px;width:49px"><span>1</span></div><div class="dc num" style="left:653px;top:100px;width:49px"><span>4</span></div><div class="dc num" style="left:703px;top:100px;width:49px"><span>0</span></div><div class="dc num" style="left:753px;top:100px;width:49px"><span>0</span></div><div class="dc num" style="left:803px;top:100px;width:49px"><span></span></div><div class="rh" style="top:120px">6</div><div class="dc" style="left:33px;top:120px;width:119px"><span><b class="j">栗林</b></span></div><div class="dc" style="left:153px;top:120px;width:119px"><span style="left:3px">krbys</span></div><div class="dc num" style="left:273px;top:120px;width:59px"><span>31.48</span></div><div class="dc num" style="left:333px;top:120px;width:59px"><span>9.258</span></div><div class="dc num" style="left:393px;top:120px;width:49px"><span>0.03</span></div><div class="dc num" style="left:443px;top:120px;width:59px"><span>3.4</span></div><div class="dc num" style="left:503px;top:120px;width:49px"><span>0</span></div><div class="dc num" style="left:553px;top:120px;width:49px"><span>1</span></div><div class="dc num" style="left:603px;top:120px;width:49px"><span>1</span></div><div class="dc num" style="left:653px;top:120px;width:49px"><span>2</span></div><div class="dc num" style="left:703px;top:120px;width:49px"><span>0</span></div><div class="dc num" style="left:753px;top:120px;width:49px"><span>1</span></div><div class="dc num" style="left:803px;top:120px;width:49px"><span></span></div><div class="rh" style="top:140px">7</div><div class="dc" style="left:33px;top:140px;width:119px"><span><b class="j">霊魂消滅</b></span></div><div class="dc" style="left:153px;top:140px;width:119px"><span style="left:3px">annihilation</span></div><div class="dc num" style="left:273px;top:140px;width:59px"><span>60.33</span></div><div class="dc num" style="left:333px;top:140px;width:59px"><span>335.166</span></div><div class="dc num" style="left:393px;top:140px;width:49px"><span>0.02</span></div><div class="dc num" style="left:443px;top:140px;width:59px"><span>0.18</span></div><div class="dc num" style="left:503px;top:140px;width:49px"><span>0</span></div><div class="dc num" style="left:553px;top:140px;width:49px"><span>1</span></div><div class="dc num" style="left:603px;top:140px;width:49px"><span>1</span></div><div class="dc num" style="left:653px;top:140px;width:49px"><span>2</span></div><div class="dc num" style="left:703px;top:140px;width:49px"><span>0</span></div><div class="dc num" style="left:753px;top:140px;width:49px"><span>0</span></div><div class="dc num" style="left:803px;top:140px;width:49px"><span></span></div><div class="rh" style="top:160px">8</div><div class="dc" style="left:33px;top:160px;width:119px"><span><b class="j">動画記事</b></span></div><div class="dc" style="left:153px;top:160px;width:119px"><span style="left:3px">kjdug</span></div><div class="dc num" style="left:273px;top:160px;width:59px"><span>73.51</span></div><div class="dc num" style="left:333px;top:160px;width:59px"><span>1225.166</span></div><div class="dc num" style="left:393px;top:160px;width:49px"><span>0.02</span></div><div class="dc num" style="left:443px;top:160px;width:59px"><span>0.06</span></div><div class="dc num" style="left:503px;top:160px;width:49px"><span>0</span></div><div class="dc num" style="left:553px;top:160px;width:49px"><span>1</span></div><div class="dc num" style="left:603px;top:160px;width:49px"><span>1</span></div><div class="dc num" style="left:653px;top:160px;width:49px"><span>1</span></div><div class="dc num" style="left:703px;top:160px;width:49px"><span>0</span></div><div class="dc num" style="left:753px;top:160px;width:49px"><span>0</span></div><div class="dc num" style="left:803px;top:160px;width:49px"><span></span></div><div class="rh" style="top:180px">9</div><div class="dc" style="left:33px;top:180px;width:119px"><span><b class="fw" style="width:9px">2</b><b class="fw" style="width:9px">1</b><b class="fw" style="width:9px">4</b><b class="j">勝</b><b class="j k">つ</b></span></div><div class="dc" style="left:153px;top:180px;width:119px"><span style="left:3px">bydkt</span></div><div class="dc num" style="left:273px;top:180px;width:59px"><span>23.54</span></div><div class="dc num" style="left:333px;top:180px;width:59px"><span>214</span></div><div class="dc num" style="left:393px;top:180px;width:49px"><span>0.04</span></div><div class="dc num" style="left:443px;top:180px;width:59px"><span>0.11</span></div><div class="dc num" style="left:503px;top:180px;width:49px"><span>0</span></div><div class="dc num" style="left:553px;top:180px;width:49px"><span>1</span></div><div class="dc num" style="left:603px;top:180px;width:49px"><span>1</span></div><div class="dc num" style="left:653px;top:180px;width:49px"><span>0</span></div><div class="dc num" style="left:703px;top:180px;width:49px"><span>0</span></div><div class="dc num" style="left:753px;top:180px;width:49px"><span>0</span></div><div class="dc num" style="left:803px;top:180px;width:49px"><span></span></div><div class="rh" style="top:200px">10</div><div class="dc" style="left:33px;top:200px;width:119px"><span><b class="j">決着</b></span></div><div class="dc" style="left:153px;top:200px;width:119px"><span style="left:3px">kccyk</span></div><div class="dc num" style="left:273px;top:200px;width:59px"><span>181.99</span></div><div class="dc num" style="left:333px;top:200px;width:59px"><span>627.551</span></div><div class="dc num" style="left:393px;top:200px;width:49px"><span>0</span></div><div class="dc num" style="left:443px;top:200px;width:59px"><span>0.29</span></div><div class="dc num" style="left:503px;top:200px;width:49px"><span>0</span></div><div class="dc num" style="left:553px;top:200px;width:49px"><span>1</span></div><div class="dc num" style="left:603px;top:200px;width:49px"><span>0</span></div><div class="dc num" style="left:653px;top:200px;width:49px"><span>6</span></div><div class="dc num" style="left:703px;top:200px;width:49px"><span>0</span></div><div class="dc num" style="left:753px;top:200px;width:49px"><span>0</span></div><div class="dc num" style="left:803px;top:200px;width:49px"><span></span></div><div class="rh" style="top:220px">11</div><div class="dc" style="left:33px;top:220px;width:119px"><span><b class="j">悪魔恥</b></span></div><div class="dc" style="left:153px;top:220px;width:119px"><span style="left:3px">hjakm</span></div><div class="dc num" style="left:273px;top:220px;width:59px"><span>56.42</span></div><div class="dc num" style="left:333px;top:220px;width:59px"><span>201.5</span></div><div class="dc num" style="left:393px;top:220px;width:49px"><span>0.01</span></div><div class="dc num" style="left:443px;top:220px;width:59px"><span>0.28</span></div><div class="dc num" style="left:503px;top:220px;width:49px"><span>0</span></div><div class="dc num" style="left:553px;top:220px;width:49px"><span>1</span></div><div class="dc num" style="left:603px;top:220px;width:49px"><span>0</span></div><div class="dc num" style="left:653px;top:220px;width:49px"><span>6</span></div><div class="dc num" style="left:703px;top:220px;width:49px"><span>0</span></div><div class="dc num" style="left:753px;top:220px;width:49px"><span>0</span></div><div class="dc num" style="left:803px;top:220px;width:49px"><span></span></div><div class="rh" style="top:240px">12</div><div class="dc" style="left:33px;top:240px;width:119px"><span><b class="j">誕生日</b></span></div><div class="dc" style="left:153px;top:240px;width:119px"><span style="left:3px">tnjyb</span></div><div class="dc num" style="left:273px;top:240px;width:59px"><span>43.33</span></div><div class="dc num" style="left:333px;top:240px;width:59px"><span>618.999</span></div><div class="dc num" style="left:393px;top:240px;width:49px"><span>0.02</span></div><div class="dc num" style="left:443px;top:240px;width:59px"><span>0.07</span></div><div class="dc num" style="left:503px;top:240px;width:49px"><span>0</span></div><div class="dc num" style="left:553px;top:240px;width:49px"><span>1</span></div><div class="dc num" style="left:603px;top:240px;width:49px"><span>0</span></div><div class="dc num" style="left:653px;top:240px;width:49px"><span>2</span></div><div class="dc num" style="left:703px;top:240px;width:49px"><span>0</span></div><div class="dc num" style="left:753px;top:240px;width:49px"><span>0</span></div><div class="dc num" style="left:803px;top:240px;width:49px"><span></span></div><div class="rh" style="top:260px">13</div><div class="dc" style="left:33px;top:260px;width:119px"><span><b class="j">空中浮揚</b></span></div><div class="dc" style="left:153px;top:260px;width:119px"><span style="left:3px">kucyfy</span></div><div class="dc num" style="left:273px;top:260px;width:59px"><span>23.33</span></div><div class="dc num" style="left:333px;top:260px;width:59px"><span>179.461</span></div><div class="dc num" style="left:393px;top:260px;width:49px"><span>0.02</span></div><div class="dc num" style="left:443px;top:260px;width:59px"><span>0.13</span></div><div class="dc num" style="left:503px;top:260px;width:49px"><span>0</span></div><div class="dc num" style="left:553px;top:260px;width:49px"><span>1</span></div><div class="dc num" style="left:603px;top:260px;width:49px"><span>0</span></div><div class="dc num" style="left:653px;top:260px;width:49px"><span>2</span></div><div class="dc num" style="left:703px;top:260px;width:49px"><span>0</span></div><div class="dc num" style="left:753px;top:260px;width:49px"><span>0</span></div><div class="dc num" style="left:803px;top:260px;width:49px"><span></span></div><div class="rh" style="top:280px">14</div><div class="dc" style="left:33px;top:280px;width:119px"><span><b class="j">新総理</b></span></div><div class="dc" style="left:153px;top:280px;width:119px"><span style="left:3px">sursn</span></div><div class="dc num" style="left:273px;top:280px;width:59px"><span>210</span></div><div class="dc num" style="left:333px;top:280px;width:59px"><span>4200</span></div><div class="dc num" style="left:393px;top:280px;width:49px"><span>0</span></div><div class="dc num" style="left:443px;top:280px;width:59px"><span>0.05</span></div><div class="dc num" style="left:503px;top:280px;width:49px"><span>0</span></div><div class="dc num" style="left:553px;top:280px;width:49px"><span>1</span></div><div class="dc num" style="left:603px;top:280px;width:49px"><span>0</span></div><div class="dc num" style="left:653px;top:280px;width:49px"><span>1</span></div><div class="dc num" style="left:703px;top:280px;width:49px"><span>0</span></div><div class="dc num" style="left:753px;top:280px;width:49px"><span>0</span></div><div class="dc num" style="left:803px;top:280px;width:49px"><span></span></div><div class="rh" style="top:300px">15</div><div class="dc" style="left:33px;top:300px;width:119px"><span><b class="j">神禊</b></span></div><div class="dc" style="left:153px;top:300px;width:119px"><span style="left:3px">msgkm</span></div><div class="dc num" style="left:273px;top:300px;width:59px"><span>55</span></div><div class="dc num" style="left:333px;top:300px;width:59px"><span>1375</span></div><div class="dc num" style="left:393px;top:300px;width:49px"><span>0.02</span></div><div class="dc num" style="left:443px;top:300px;width:59px"><span>0.04</span></div><div class="dc num" style="left:503px;top:300px;width:49px"><span>0</span></div><div class="dc num" style="left:553px;top:300px;width:49px"><span>1</span></div><div class="dc num" style="left:603px;top:300px;width:49px"><span>0</span></div><div class="dc num" style="left:653px;top:300px;width:49px"><span>1</span></div><div class="dc num" style="left:703px;top:300px;width:49px"><span>0</span></div><div class="dc num" style="left:753px;top:300px;width:49px"><span>0</span></div><div class="dc num" style="left:803px;top:300px;width:49px"><span></span></div><div class="rh" style="top:320px">16</div><div class="dc" style="left:33px;top:320px;width:119px"><span><b class="j">高周波</b></span></div><div class="dc" style="left:153px;top:320px;width:119px"><span style="left:3px">kusyh</span></div><div class="dc num" style="left:273px;top:320px;width:59px"><span>19.28</span></div><div class="dc num" style="left:333px;top:320px;width:59px"><span>214.222</span></div><div class="dc num" style="left:393px;top:320px;width:49px"><span>0.02</span></div><div class="dc num" style="left:443px;top:320px;width:59px"><span>0.09</span></div><div class="dc num" style="left:503px;top:320px;width:49px"><span>0</span></div><div class="dc num" style="left:553px;top:320px;width:49px"><span>1</span></div><div class="dc num" style="left:603px;top:320px;width:49px"><span>0</span></div><div class="dc num" style="left:653px;top:320px;width:49px"><span>1</span></div><div class="dc num" style="left:703px;top:320px;width:49px"><span>0</span></div><div class="dc num" style="left:753px;top:320px;width:49px"><span>0</span></div><div class="dc num" style="left:803px;top:320px;width:49px"><span></span></div><div class="rh" style="top:340px">17</div><div class="dc" style="left:33px;top:340px;width:119px"><span><b class="j">守護角</b></span></div><div class="dc" style="left:153px;top:340px;width:119px"><span style="left:3px">kksyg</span></div><div class="dc num" style="left:273px;top:340px;width:59px"><span>1029.4</span></div><div class="dc num" style="left:333px;top:340px;width:59px"><span>6862.666</span></div><div class="dc num" style="left:393px;top:340px;width:49px"><span>0</span></div><div class="dc num" style="left:443px;top:340px;width:59px"><span>0.15</span></div><div class="dc num" style="left:503px;top:340px;width:49px"><span>0</span></div><div class="dc num" style="left:553px;top:340px;width:49px"><span>1</span></div><div class="dc num" style="left:603px;top:340px;width:49px"><span>0</span></div><div class="dc num" style="left:653px;top:340px;width:49px"><span>0</span></div><div class="dc num" style="left:703px;top:340px;width:49px"><span>1</span></div><div class="dc num" style="left:753px;top:340px;width:49px"><span>1</span></div><div class="dc num" style="left:803px;top:340px;width:49px"><span></span></div><div class="rh" style="top:360px">18</div><div class="dc" style="left:33px;top:360px;width:119px"><span><b class="j">力記事</b></span></div><div class="dc" style="left:153px;top:360px;width:119px"><span style="left:3px">tkrkj</span></div><div class="dc num" style="left:273px;top:360px;width:59px"><span>45.83</span></div><div class="dc num" style="left:333px;top:360px;width:59px"><span>416.636</span></div><div class="dc num" style="left:393px;top:360px;width:49px"><span>0.03</span></div><div class="dc num" style="left:443px;top:360px;width:59px"><span>0.11</span></div><div class="dc num" style="left:503px;top:360px;width:49px"><span>0</span></div><div class="dc num" style="left:553px;top:360px;width:49px"><span>1</span></div><div class="dc num" style="left:603px;top:360px;width:49px"><span>0</span></div><div class="dc num" style="left:653px;top:360px;width:49px"><span>0</span></div><div class="dc num" style="left:703px;top:360px;width:49px"><span>1</span></div><div class="dc num" style="left:753px;top:360px;width:49px"><span>0</span></div><div class="dc num" style="left:803px;top:360px;width:49px"><span></span></div><div class="rh" style="top:380px">19</div><div class="dc" style="left:33px;top:380px;width:119px"><span><b class="fw" style="width:11px">M</b><b class="fw" style="width:11px">C</b><b class="j">記事化</b></span></div><div class="dc" style="left:153px;top:380px;width:119px"><span style="left:3px">kjkMC</span></div><div class="dc num" style="left:273px;top:380px;width:59px"><span>118.79</span></div><div class="dc num" style="left:333px;top:380px;width:59px"><span>659.944</span></div><div class="dc num" style="left:393px;top:380px;width:49px"><span>0.01</span></div><div class="dc num" style="left:443px;top:380px;width:59px"><span>0.18</span></div><div class="dc num" style="left:503px;top:380px;width:49px"><span>0</span></div><div class="dc num" style="left:553px;top:380px;width:49px"><span>0</span></div><div class="dc num" style="left:603px;top:380px;width:49px"><span>2</span></div><div class="dc num" style="left:653px;top:380px;width:49px"><span>2</span></div><div class="dc num" style="left:703px;top:380px;width:49px"><span>2</span></div><div class="dc num" style="left:753px;top:380px;width:49px"><span>0</span></div><div class="dc num" style="left:803px;top:380px;width:49px"><span></span></div><div class="rh" style="top:400px"></div><div class="dc" style="left:33px;top:400px;width:119px"><span><b class="j">総合調</b></span></div><div class="dc" style="left:153px;top:400px;width:119px"><span style="left:3px">sgcho</span></div><div class="dc num" style="left:273px;top:400px;width:59px"><span></span></div><div class="dc num" style="left:333px;top:400px;width:59px"><span></span></div><div class="dc num" style="left:393px;top:400px;width:49px"><span></span></div><div class="dc num" style="left:443px;top:400px;width:59px"><span></span></div><div class="dc num" style="left:503px;top:400px;width:49px"><span></span></div><div class="dc num" style="left:553px;top:400px;width:49px"><span></span></div><div class="dc num" style="left:603px;top:400px;width:49px"><span></span></div><div class="dc num" style="left:653px;top:400px;width:49px"><span></span></div><div class="dc num" style="left:703px;top:400px;width:49px"><span></span></div><div class="dc num" style="left:753px;top:400px;width:49px"><span></span></div><div class="dc num" style="left:803px;top:400px;width:49px"><span></span></div></div><div class="hs"><svg class="la" width="8" height="8" viewBox="0 0 8 8"><path d="M6 0.8 L1.8 4 L6 7.2" fill="none" stroke="#606060" stroke-width="2"/></svg><div class="th" style="width:698px"></div></div></div></div><svg class="cursor" style="z-index:45" width="12" height="20" viewBox="0 0 12 20"><path d="M0.5 0.5 L0.5 16.5 L4.5 12.5 L7.5 18.5 L9.5 17.5 L6.5 11.5 L11.5 11.5 Z" fill="#fff" stroke="#000" stroke-width="1"/></svg><div class="vs" style="z-index:100"><svg style="position:absolute;left:3px;top:4px" width="10" height="8" viewBox="0 0 10 8"><path d="M1.2 6.8 L4.5 2.8 L7.8 6.8" fill="none" stroke="#505050" stroke-width="2"/></svg><div class="th2"></div></div></body></html>
